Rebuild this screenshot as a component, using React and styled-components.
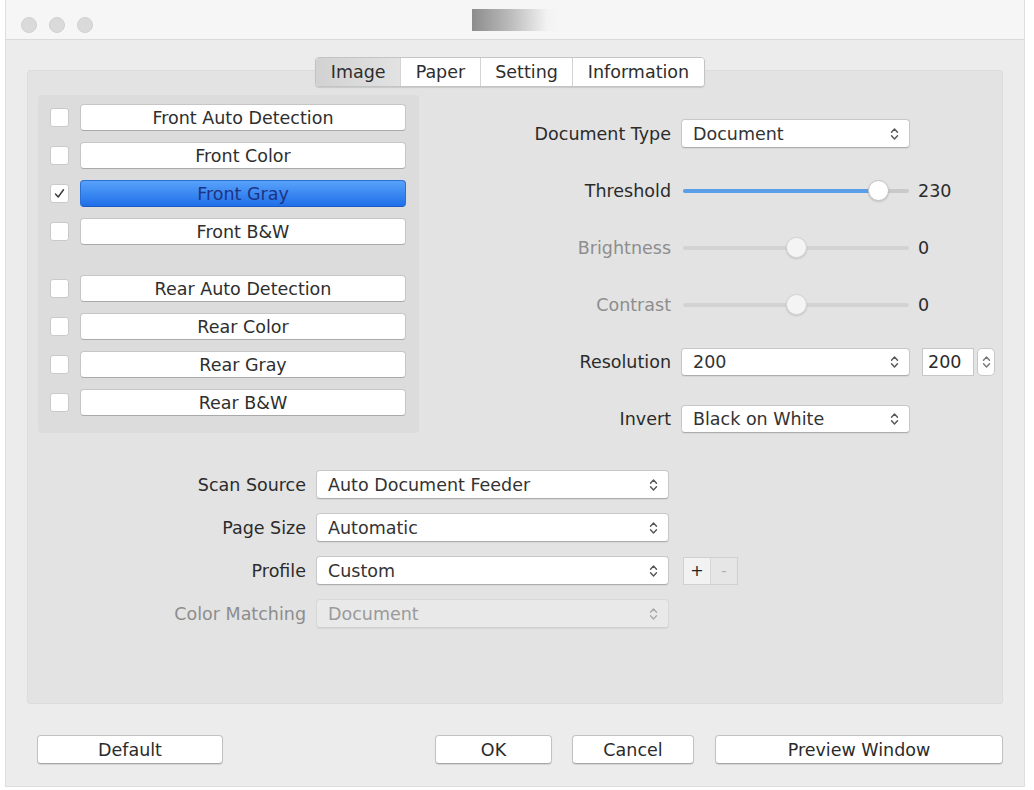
import React from "react";
import styled, { createGlobalStyle } from "styled-components";

const GlobalStyle = createGlobalStyle`
  body {
    margin: 0;
    background: #ffffff;
    font-family: "DejaVu Sans", "Liberation Sans", sans-serif;
    color: #2b2b2b;
  }
`;

const Window = styled.div`
  width: 1020px;
  height: 787px;
  margin-left: 5px;
  background: #ececec;
  border-left: 1px solid #dedede;
  border-right: 1px solid #dedede;
  border-bottom: 1px solid #dedede;
  box-sizing: border-box;
  display: flex;
  flex-direction: column;
`;

const TitleBar = styled.div`
  height: 40px;
  flex: none;
  background: #f6f6f6;
  border-bottom: 1px solid #dadada;
  box-sizing: border-box;
  display: grid;
  grid-template-columns: 1fr auto 1fr;
  align-items: start;
`;

const Lights = styled.div`
  display: flex;
  gap: 12px;
  padding: 17px 0 0 15px;
`;

const Light = styled.span`
  width: 16px;
  height: 16px;
  border-radius: 50%;
  background: #dadada;
  border: 1px solid #d0d0d0;
  box-sizing: border-box;
`;

const TitleMark = styled.div`
  width: 88px;
  height: 22px;
  margin: 9px 0 0 2px;
  background: linear-gradient(to right, #8c8c8c, #bdbdbd 45%, #f2f2f2 85%, #f6f6f6);
`;

const Body = styled.div`
  flex: 1;
  display: flex;
  flex-direction: column;
  padding: 17px 21px 0 21px;
`;

const TabBar = styled.div`
  align-self: center;
  display: flex;
  height: 30px;
  margin: 0 10px -17px 0;
  position: relative;
  z-index: 1;
  border: 1px solid #c4c4c4;
  border-radius: 4px;
  background: #fff;
  box-shadow: 0 1px 1px rgba(0, 0, 0, 0.12);
  overflow: hidden;
  box-sizing: border-box;
`;

const Tab = styled.div`
  padding: 0 14.5px;
  display: flex;
  align-items: center;
  font-size: 17.5px;
  color: #2e2e2e;
  background: ${({ $active }) =>
    $active ? "linear-gradient(to right, #d2d2d2, #e2e2e2)" : "#ffffff"};
  & + & {
    border-left: 1px solid #d4d4d4;
  }
`;

const TabBox = styled.div`
  height: 634px;
  background: #e3e3e3;
  border: 1px solid #dcdcdc;
  border-radius: 3px;
  box-sizing: border-box;
  padding: 24px 10px 0 10px;
`;

const TopSection = styled.div`
  display: grid;
  grid-template-columns: 381px 1fr;
`;

const ModePanel = styled.div`
  background: #dcdcdc;
  border-radius: 3px;
  padding: 9px 13px 13px 12px;
  display: flex;
  flex-direction: column;
  gap: 30px;
`;

const ModeGroup = styled.div`
  display: flex;
  flex-direction: column;
  gap: 11px;
`;

const ModeRow = styled.div`
  display: flex;
  align-items: center;
  gap: 11px;
  height: 27px;
`;

const CheckBox = styled.span`
  width: 19px;
  height: 19px;
  flex: none;
  background: #fff;
  border: 1px solid #cacaca;
  border-radius: 3px;
  box-sizing: border-box;
  display: flex;
  align-items: center;
  justify-content: center;
`;

const ModeButton = styled.div`
  flex: 1;
  height: 27px;
  box-sizing: border-box;
  border-radius: 4px;
  display: flex;
  align-items: center;
  justify-content: center;
  font-size: 17.5px;
  color: ${({ $active }) => ($active ? "#1d3384" : "#2e2e2e")};
  background: ${({ $active }) =>
    $active ? "linear-gradient(#58a2fa, #1f6fe9)" : "#ffffff"};
  border: 1px solid ${({ $active }) => ($active ? "#2a6fd6" : "#c6c6c6")};
  border-bottom-color: ${({ $active }) => ($active ? "#1a5cc4" : "#a9a9a9")};
`;

const Settings = styled.div`
  display: grid;
  grid-template-columns: 252px auto;
  grid-auto-rows: 29px;
  column-gap: 10px;
  row-gap: 28px;
  align-items: center;
  padding-top: 24px;
`;

const Label = styled.div`
  justify-self: end;
  font-size: 17.5px;
  white-space: nowrap;
  color: ${({ $disabled }) => ($disabled ? "#8d8d8d" : "#2b2b2b")};
`;

const Popup = styled.div`
  width: ${({ $w }) => $w}px;
  height: ${({ $h }) => $h || 29}px;
  box-sizing: border-box;
  padding: 0 10px 0 11px;
  display: flex;
  align-items: center;
  justify-content: space-between;
  font-size: 17.5px;
  border-radius: 4px;
  background: ${({ $disabled }) => ($disabled ? "#e9e9e9" : "#ffffff")};
  color: ${({ $disabled }) => ($disabled ? "#9a9a9a" : "#333333")};
  border: 1px solid ${({ $disabled }) => ($disabled ? "#d8d8d8" : "#c8c8c8")};
  border-bottom-color: ${({ $disabled }) => ($disabled ? "#d0d0d0" : "#adadad")};
  box-shadow: 0 1px 1px rgba(0, 0, 0, 0.06);
`;

const Inline = styled.div`
  display: flex;
  align-items: center;
`;

const Track = styled.div`
  width: 226px;
  height: 4px;
  margin-left: 2px;
  border-radius: 2px;
  position: relative;
  background: ${({ $disabled }) => ($disabled ? "#d3d3d3" : "#c9c9c9")};
`;

const Fill = styled.div`
  height: 100%;
  border-radius: 2px;
  background: #5b9de6;
`;

const Thumb = styled.span`
  position: absolute;
  top: 50%;
  width: 21px;
  height: 21px;
  margin: -10.5px 0 0 -10.5px;
  border-radius: 50%;
  box-sizing: border-box;
  background: ${({ $disabled }) => ($disabled ? "#f4f4f4" : "#ffffff")};
  border: 1px solid ${({ $disabled }) => ($disabled ? "#d4d4d4" : "#c4c4c4")};
  box-shadow: 0 1px 2px rgba(0, 0, 0, 0.15);
`;

const Value = styled.span`
  margin-left: 9px;
  font-size: 17.5px;
  color: #2b2b2b;
`;

const NumberField = styled.div`
  width: 52px;
  height: 28px;
  margin-left: 12px;
  box-sizing: border-box;
  border: 1px solid #c6c6c6;
  background: #fff;
  padding-left: 5px;
  display: flex;
  align-items: center;
  font-size: 17.5px;
`;

const Stepper = styled.div`
  width: 18px;
  height: 28px;
  margin-left: 3px;
  box-sizing: border-box;
  border: 1px solid #c8c8c8;
  border-radius: 5px;
  background: #fff;
  display: flex;
  align-items: center;
  justify-content: center;
`;

const SourceForm = styled.div`
  display: grid;
  grid-template-columns: 268px 353px auto;
  grid-auto-rows: 29px;
  column-gap: 10px;
  row-gap: 14px;
  align-items: center;
  margin-top: 37px;
`;

const PlusMinus = styled.div`
  display: flex;
  height: 28px;
  margin-left: 4px;
  border: 1px solid #d0d0d0;
  box-sizing: border-box;
  justify-self: start;
`;

const PMCell = styled.span`
  width: 26px;
  display: flex;
  align-items: center;
  justify-content: center;
  font-size: 16px;
  background: ${({ $disabled }) => ($disabled ? "#e6e6e6" : "#f2f2f2")};
  color: ${({ $disabled }) => ($disabled ? "#b4b4b4" : "#222222")};
  & + & {
    border-left: 1px solid #d6d6d6;
  }
`;

const Footer = styled.div`
  display: flex;
  align-items: center;
  margin: 31px 0 0 10px;
`;

const PushButton = styled.div`
  width: ${({ $w }) => $w}px;
  height: 29px;
  margin-left: ${({ $gap }) => $gap || 0}px;
  box-sizing: border-box;
  border-radius: 4px;
  background: #ffffff;
  border: 1px solid #c2c2c2;
  border-bottom-color: #a6a6a6;
  box-shadow: 0 1px 1px rgba(0, 0, 0, 0.1);
  display: flex;
  align-items: center;
  justify-content: center;
  font-size: 17.5px;
  color: #2b2b2b;
`;

const Spacer = styled.div`
  flex: 1;
`;

function Chevrons({ color = "#555" }) {
  return (
    <svg width="9" height="14" viewBox="0 0 9 14">
      <path d="M1.5 5.2 L4.5 2 L7.5 5.2 M1.5 8.8 L4.5 12 L7.5 8.8" fill="none" stroke={color} strokeWidth="1.4" strokeLinecap="round" strokeLinejoin="round" />
    </svg>
  );
}

function Check() {
  return (
    <svg width="13" height="13" viewBox="0 0 13 13">
      <path d="M2.5 7 L5.2 10 L10.5 2.8" fill="none" stroke="#3c3c3c" strokeWidth="1.5" strokeLinecap="round" strokeLinejoin="round" />
    </svg>
  );
}

function Slider({ pct, disabled }) {
  return (
    <Track $disabled={disabled}>
      {!disabled && <Fill style={{ width: `${pct}%` }} />}
      <Thumb $disabled={disabled} style={{ left: `${pct}%` }} />
    </Track>
  );
}

const front = ["Front Auto Detection", "Front Color", "Front Gray", "Front B&W"];
const rear = ["Rear Auto Detection", "Rear Color", "Rear Gray", "Rear B&W"];

export default function App() {
  const renderMode = (name) => {
    const on = name === "Front Gray";
    return (
      <ModeRow key={name}>
        <CheckBox>{on && <Check />}</CheckBox>
        <ModeButton $active={on}>{name}</ModeButton>
      </ModeRow>
    );
  };

  return (
    <>
      <GlobalStyle />
      <Window>
        <TitleBar>
          <Lights>
            <Light />
            <Light />
            <Light />
          </Lights>
          <TitleMark />
          <div />
        </TitleBar>

        <Body>
          <TabBar>
            <Tab $active>Image</Tab>
            <Tab>Paper</Tab>
            <Tab>Setting</Tab>
            <Tab>Information</Tab>
          </TabBar>

          <TabBox>
            <TopSection>
              <ModePanel>
                <ModeGroup>{front.map(renderMode)}</ModeGroup>
                <ModeGroup>{rear.map(renderMode)}</ModeGroup>
              </ModePanel>

              <Settings>
                <Label>Document Type</Label>
                <Popup $w={229}>
                  Document <Chevrons />
                </Popup>

                <Label>Threshold</Label>
                <Inline>
                  <Slider pct={86.7} />
                  <Value>230</Value>
                </Inline>

                <Label $disabled>Brightness</Label>
                <Inline>
                  <Slider pct={50} disabled />
                  <Value>0</Value>
                </Inline>

                <Label $disabled>Contrast</Label>
                <Inline>
                  <Slider pct={50} disabled />
                  <Value>0</Value>
                </Inline>

                <Label>Resolution</Label>
                <Inline>
                  <Popup $w={229} $h={28}>
                    200 <Chevrons />
                  </Popup>
                  <NumberField>200</NumberField>
                  <Stepper>
                    <Chevrons color="#777" />
                  </Stepper>
                </Inline>

                <Label>Invert</Label>
                <Popup $w={229} $h={28}>
                  Black on White <Chevrons />
                </Popup>
              </Settings>
            </TopSection>

            <SourceForm>
              <Label>Scan Source</Label>
              <Popup $w={353}>
                Auto Document Feeder <Chevrons />
              </Popup>
              <div />

              <Label>Page Size</Label>
              <Popup $w={353}>
                Automatic <Chevrons />
              </Popup>
              <div />

              <Label>Profile</Label>
              <Popup $w={353}>
                Custom <Chevrons />
              </Popup>
              <PlusMinus>
                <PMCell>+</PMCell>
                <PMCell $disabled>-</PMCell>
              </PlusMinus>

              <Label $disabled>Color Matching</Label>
              <Popup $w={353} $disabled>
                Document <Chevrons color="#aaa" />
              </Popup>
              <div />
            </SourceForm>
          </TabBox>

          <Footer>
            <PushButton $w={186}>Default</PushButton>
            <Spacer />
            <PushButton $w={117}>OK</PushButton>
            <PushButton $w={122} $gap={20}>Cancel</PushButton>
            <PushButton $w={288} $gap={21}>Preview Window</PushButton>
          </Footer>
        </Body>
      </Window>
    </>
  );
}
